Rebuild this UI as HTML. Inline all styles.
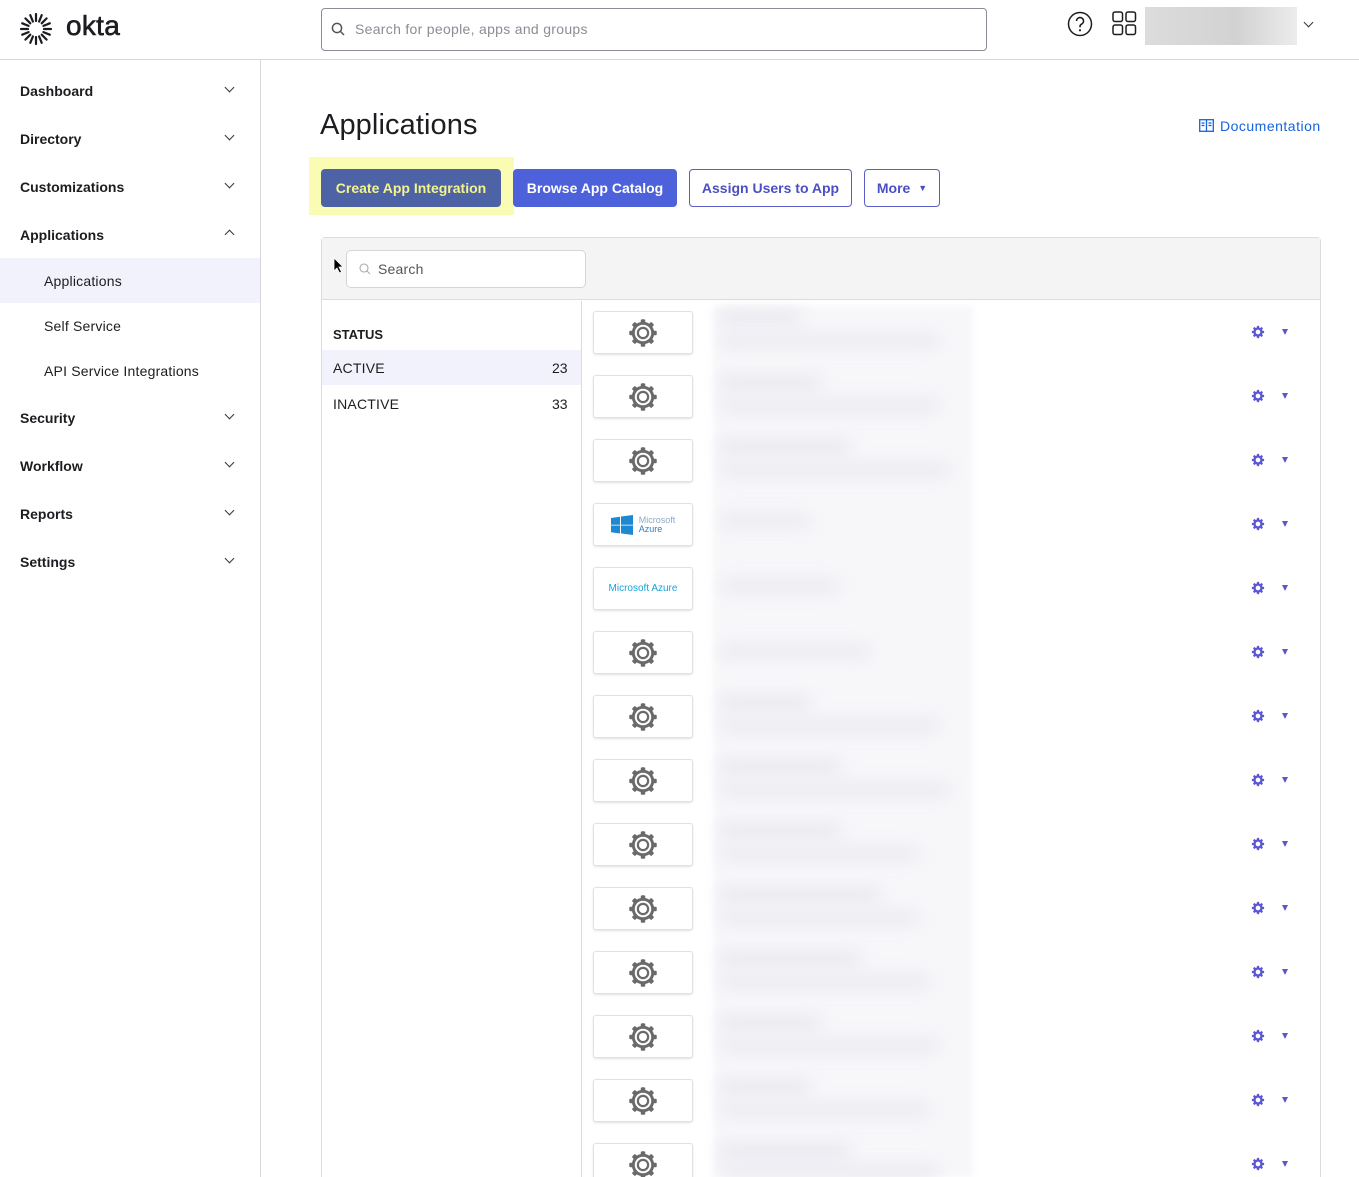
<!DOCTYPE html>
<html><head><meta charset="utf-8"><style>
*{box-sizing:border-box;margin:0;padding:0}
html,body{width:1359px;height:1177px;overflow:hidden}
body{background:#fff;font-family:"Liberation Sans",sans-serif;color:#1d1d21;position:relative}
.a{position:absolute}
.nav{font-size:14px;font-weight:bold;color:#1d1d21}
.chev{position:absolute;left:226px;width:7px;height:7px;border-right:1.5px solid #333;border-bottom:1.5px solid #333;transform:rotate(45deg)}
.chevu{transform:rotate(-135deg)}
.sub{font-size:14px;color:#1d1d21;letter-spacing:0.2px}
.btn{position:absolute;top:169px;height:38px;border-radius:4px;font-size:14px;font-weight:bold;display:flex;align-items:center;justify-content:center}
.logo{position:absolute;left:593px;width:100px;height:43px;border:1px solid #e2e2e2;border-radius:3px;background:#fff;box-shadow:0 1px 2px rgba(0,0,0,.12);display:flex;align-items:center;justify-content:center}
.blur{position:absolute;background:#e2e2ea;filter:blur(8px);border-radius:6px}
.rg{position:absolute;left:1251px}
.tri{position:absolute;left:1282px;width:0;height:0;border-left:3.5px solid transparent;border-right:3.5px solid transparent;border-top:6px solid #5b57d1}
</style></head><body>
<svg width="0" height="0" style="position:absolute"><defs>
<symbol id="g" viewBox="0 0 24 24"><g fill="#6a6a6a"><circle cx="12" cy="12" r="9"/><g><rect x="10.2" y="1" width="3.6" height="4.5" rx="1"/><rect x="10.2" y="18.5" width="3.6" height="4.5" rx="1"/><rect x="1" y="10.2" width="4.5" height="3.6" rx="1"/><rect x="18.5" y="10.2" width="4.5" height="3.6" rx="1"/><g transform="rotate(45 12 12)"><rect x="10.2" y="1" width="3.6" height="4.5" rx="1"/><rect x="10.2" y="18.5" width="3.6" height="4.5" rx="1"/><rect x="1" y="10.2" width="4.5" height="3.6" rx="1"/><rect x="18.5" y="10.2" width="4.5" height="3.6" rx="1"/></g></g></g><circle cx="12" cy="12" r="6.6" fill="#fff"/><circle cx="12" cy="12" r="5" fill="#6a6a6a"/><circle cx="12" cy="12" r="3.2" fill="#fff"/></symbol>
<symbol id="p" viewBox="0 0 24 24"><g fill="#5b57d1"><circle cx="12" cy="12" r="8"/><rect x="10" y="1.5" width="4" height="21" rx="1"/><rect x="1.5" y="10" width="21" height="4" rx="1"/><g transform="rotate(45 12 12)"><rect x="10" y="1.5" width="4" height="21" rx="1"/><rect x="1.5" y="10" width="21" height="4" rx="1"/></g></g><circle cx="12" cy="12" r="4" fill="#fff"/></symbol>
</defs></svg>

<!-- header -->
<svg class="a" style="left:19px;top:12px" width="34" height="34" viewBox="0 0 34 34"><g stroke="#1d1d21" stroke-width="2.2" stroke-linecap="round">
<line x1="17" y1="2" x2="17" y2="9"/><line x1="17" y1="25" x2="17" y2="32"/><line x1="2" y1="17" x2="9" y2="17"/><line x1="25" y1="17" x2="32" y2="17"/>
<line x1="6.4" y1="6.4" x2="11.3" y2="11.3"/><line x1="22.7" y1="22.7" x2="27.6" y2="27.6"/><line x1="27.6" y1="6.4" x2="22.7" y2="11.3"/><line x1="11.3" y1="22.7" x2="6.4" y2="27.6"/>
<line x1="11.3" y1="3.2" x2="13.9" y2="9.6"/><line x1="20.1" y1="24.4" x2="22.7" y2="30.8"/><line x1="22.7" y1="3.2" x2="20.1" y2="9.6"/><line x1="13.9" y1="24.4" x2="11.3" y2="30.8"/>
<line x1="3.2" y1="11.3" x2="9.6" y2="13.9"/><line x1="24.4" y1="20.1" x2="30.8" y2="22.7"/><line x1="30.8" y1="11.3" x2="24.4" y2="13.9"/><line x1="9.6" y1="20.1" x2="3.2" y2="22.7"/></g></svg>
<div class="a" style="left:66px;top:10px;font-size:28px;font-weight:normal;letter-spacing:0.3px;-webkit-text-stroke:0.6px #1d1d21">okta</div>
<div class="a" style="left:321px;top:8px;width:666px;height:43px;border:1px solid #8c8c96;border-radius:4px"></div>
<svg class="a" style="left:331px;top:22px" width="14" height="14" viewBox="0 0 14 14"><circle cx="6" cy="6" r="4.6" fill="none" stroke="#555" stroke-width="1.5"/><line x1="9.4" y1="9.4" x2="13" y2="13" stroke="#555" stroke-width="1.5"/></svg>
<div class="a" style="left:355px;top:21px;font-size:14px;color:#8c8c96;letter-spacing:0.3px">Search for people, apps and groups</div>
<svg class="a" style="left:1067px;top:11px" width="26" height="26" viewBox="0 0 26 26"><circle cx="13" cy="13" r="11.5" fill="none" stroke="#1d1d21" stroke-width="1.5"/><path d="M9.5 10a3.5 3.5 0 1 1 5 3.2c-1 .5-1.5 1.2-1.5 2.3v.8" fill="none" stroke="#1d1d21" stroke-width="1.6"/><circle cx="13" cy="19.3" r="1.1" fill="#1d1d21"/></svg>
<svg class="a" style="left:1112px;top:11px" width="25" height="25" viewBox="0 0 25 25"><g fill="none" stroke="#1d1d21" stroke-width="1.5"><rect x="1" y="1" width="9.5" height="9.5" rx="2"/><rect x="14" y="1" width="9.5" height="9.5" rx="2"/><rect x="1" y="14" width="9.5" height="9.5" rx="2"/><rect x="14" y="14" width="9.5" height="9.5" rx="2"/></g></svg>
<div class="a" style="left:1145px;top:7px;width:152px;height:38px;background:linear-gradient(90deg,#dcdcdc,#d2d2d2 60%,#ececec)"></div>
<div class="a" style="left:1305px;top:19px;width:7px;height:7px;border-right:1.5px solid #333;border-bottom:1.5px solid #333;transform:rotate(45deg)"></div>
<div class="a" style="left:0;top:59px;width:1359px;height:1px;background:#d7d7dc"></div>

<!-- sidebar -->
<div class="a" style="left:260px;top:60px;width:1px;height:1117px;background:#d7d7dc"></div>
<div class="a nav" style="left:20px;top:83px">Dashboard</div><div class="chev" style="top:84px"></div>
<div class="a nav" style="left:20px;top:131px">Directory</div><div class="chev" style="top:132px"></div>
<div class="a nav" style="left:20px;top:179px">Customizations</div><div class="chev" style="top:180px"></div>
<div class="a nav" style="left:20px;top:227px">Applications</div><div class="chev chevu" style="top:231px"></div>
<div class="a" style="left:0;top:258px;width:260px;height:45px;background:#f1f2fb"></div>
<div class="a sub" style="left:44px;top:273px">Applications</div>
<div class="a sub" style="left:44px;top:318px">Self Service</div>
<div class="a sub" style="left:44px;top:363px">API Service Integrations</div>
<div class="a nav" style="left:20px;top:410px">Security</div><div class="chev" style="top:411px"></div>
<div class="a nav" style="left:20px;top:458px">Workflow</div><div class="chev" style="top:459px"></div>
<div class="a nav" style="left:20px;top:506px">Reports</div><div class="chev" style="top:507px"></div>
<div class="a nav" style="left:20px;top:554px">Settings</div><div class="chev" style="top:555px"></div>

<!-- main -->
<div class="a" style="left:320px;top:109px;font-size:29px;color:#1d1d21;letter-spacing:0.1px">Applications</div>
<svg class="a" style="left:1199px;top:119px" width="15" height="13" viewBox="0 0 15 13"><g fill="none" stroke="#1662dd" stroke-width="1.3"><rect x="0.7" y="0.7" width="13.6" height="11.6"/><line x1="7.5" y1="0.7" x2="7.5" y2="12.3"/><line x1="2.5" y1="4" x2="5.5" y2="4"/><line x1="2.5" y1="6.5" x2="5.5" y2="6.5"/><line x1="9.5" y1="4" x2="12.5" y2="4"/><line x1="9.5" y1="6.5" x2="12.5" y2="6.5"/></g></svg>
<div class="a" style="left:1220px;top:118px;font-size:14px;color:#1662dd;letter-spacing:0.5px">Documentation</div>

<div class="a" style="left:309px;top:157px;width:205px;height:58px;background:#fbfcb4"></div>
<div class="btn" style="left:321px;width:180px;background:#4e62a6;color:#f3f58a">Create App Integration</div>
<div class="btn" style="left:513px;width:164px;background:#4d61db;color:#fff">Browse App Catalog</div>
<div class="btn" style="left:689px;width:163px;border:1px solid #5a5fc9;color:#4b4fc4">Assign Users to App</div>
<div class="btn" style="left:864px;width:76px;border:1px solid #5a5fc9;color:#4b4fc4">More&nbsp;<span style="font-size:9px;margin-left:4px">▼</span></div>

<div class="a" style="left:321px;top:237px;width:1000px;height:960px;border:1px solid #dcdcdc;border-radius:4px;background:#fff"></div>
<div class="a" style="left:322px;top:238px;width:998px;height:62px;background:#f4f4f4;border-bottom:1px solid #dcdcdc"></div>
<div class="a" style="left:346px;top:250px;width:240px;height:38px;background:#fff;border:1px solid #d5d5d8;border-radius:5px"></div>
<svg class="a" style="left:359px;top:263px" width="12" height="12" viewBox="0 0 12 12"><circle cx="5" cy="5" r="4" fill="none" stroke="#aaa" stroke-width="1.1"/><line x1="8" y1="8" x2="11" y2="11" stroke="#aaa" stroke-width="1.1"/></svg>
<div class="a" style="left:378px;top:261px;font-size:14px;color:#555;letter-spacing:0.2px">Search</div>
<svg class="a" style="left:333px;top:257px" width="11" height="17" viewBox="0 0 11 17"><path d="M1 1v13l3-3 2.5 5 2-1-2.5-5h4z" fill="#000" stroke="#fff" stroke-width="0.8"/></svg>

<div class="a" style="left:581px;top:301px;width:1px;height:876px;background:#dcdcdc"></div>
<div class="a" style="left:333px;top:327px;font-size:13px;font-weight:bold">STATUS</div>
<div class="a" style="left:322px;top:350px;width:259px;height:35px;background:#f1f2fb"></div>
<div class="a" style="left:333px;top:360px;font-size:14px;letter-spacing:0.2px">ACTIVE</div><div class="a" style="left:552px;top:360px;font-size:14px">23</div>
<div class="a" style="left:333px;top:396px;font-size:14px;letter-spacing:0.2px">INACTIVE</div><div class="a" style="left:552px;top:396px;font-size:14px">33</div>

<!-- blurred area -->
<div class="a" style="left:713px;top:306px;width:260px;height:871px;background:#f7f7fa;filter:blur(3px)"></div>

<!-- rows -->
<div class="logo" style="top:311px"><svg width="30" height="30"><use href="#g"/></svg></div>
<div class="logo" style="top:375px"><svg width="30" height="30"><use href="#g"/></svg></div>
<div class="logo" style="top:439px"><svg width="30" height="30"><use href="#g"/></svg></div>
<div class="logo" style="top:503px"><svg width="22" height="20" viewBox="0 0 22 20" style="margin-right:6px"><path d="M0 3l9-1.3v8H0zM10 1.5L22 0v9.7H10zM0 10.5h9v8L0 17.2zM10 10.5h12V20l-12-1.6z" fill="#1e88d0"/></svg><div style="font-size:9px;line-height:9px;color:#2f7fc4"><span style="color:#8fa9c9">Microsoft</span><br>Azure</div></div>
<div class="logo" style="top:567px"><span style="font-size:10px;color:#1aa3d8">Microsoft Azure</span></div>
<div class="logo" style="top:631px"><svg width="30" height="30"><use href="#g"/></svg></div>
<div class="logo" style="top:695px"><svg width="30" height="30"><use href="#g"/></svg></div>
<div class="logo" style="top:759px"><svg width="30" height="30"><use href="#g"/></svg></div>
<div class="logo" style="top:823px"><svg width="30" height="30"><use href="#g"/></svg></div>
<div class="logo" style="top:887px"><svg width="30" height="30"><use href="#g"/></svg></div>
<div class="logo" style="top:951px"><svg width="30" height="30"><use href="#g"/></svg></div>
<div class="logo" style="top:1015px"><svg width="30" height="30"><use href="#g"/></svg></div>
<div class="logo" style="top:1079px"><svg width="30" height="30"><use href="#g"/></svg></div>
<div class="logo" style="top:1143px"><svg width="30" height="30"><use href="#g"/></svg></div>

<div class="blur" style="left:720px;top:312px;width:80px;height:10px"></div><div class="blur" style="left:720px;top:335px;width:220px;height:12px;opacity:.7"></div>
<div class="blur" style="left:720px;top:378px;width:100px;height:10px"></div><div class="blur" style="left:720px;top:400px;width:220px;height:12px;opacity:.7"></div>
<div class="blur" style="left:720px;top:442px;width:130px;height:10px"></div><div class="blur" style="left:720px;top:464px;width:230px;height:12px;opacity:.7"></div>
<div class="blur" style="left:720px;top:515px;width:90px;height:12px;opacity:.7"></div>
<div class="blur" style="left:720px;top:580px;width:120px;height:12px;opacity:.7"></div>
<div class="blur" style="left:720px;top:645px;width:150px;height:12px;opacity:.7"></div>
<div class="blur" style="left:720px;top:698px;width:90px;height:10px"></div><div class="blur" style="left:720px;top:720px;width:220px;height:12px;opacity:.7"></div>
<div class="blur" style="left:720px;top:762px;width:120px;height:10px"></div><div class="blur" style="left:720px;top:784px;width:230px;height:12px;opacity:.7"></div>
<div class="blur" style="left:720px;top:826px;width:120px;height:10px"></div><div class="blur" style="left:720px;top:848px;width:200px;height:12px;opacity:.7"></div>
<div class="blur" style="left:720px;top:890px;width:160px;height:10px"></div><div class="blur" style="left:720px;top:912px;width:200px;height:12px;opacity:.7"></div>
<div class="blur" style="left:720px;top:954px;width:140px;height:10px"></div><div class="blur" style="left:720px;top:976px;width:210px;height:12px;opacity:.7"></div>
<div class="blur" style="left:720px;top:1018px;width:100px;height:10px"></div><div class="blur" style="left:720px;top:1040px;width:220px;height:12px;opacity:.7"></div>
<div class="blur" style="left:720px;top:1082px;width:90px;height:10px"></div><div class="blur" style="left:720px;top:1104px;width:210px;height:12px;opacity:.7"></div>
<div class="blur" style="left:720px;top:1146px;width:130px;height:10px"></div><div class="blur" style="left:720px;top:1166px;width:220px;height:12px;opacity:.7"></div>

<svg class="rg" style="top:325px" width="14" height="14"><use href="#p"/></svg><div class="tri" style="top:329px"></div>
<svg class="rg" style="top:389px" width="14" height="14"><use href="#p"/></svg><div class="tri" style="top:393px"></div>
<svg class="rg" style="top:453px" width="14" height="14"><use href="#p"/></svg><div class="tri" style="top:457px"></div>
<svg class="rg" style="top:517px" width="14" height="14"><use href="#p"/></svg><div class="tri" style="top:521px"></div>
<svg class="rg" style="top:581px" width="14" height="14"><use href="#p"/></svg><div class="tri" style="top:585px"></div>
<svg class="rg" style="top:645px" width="14" height="14"><use href="#p"/></svg><div class="tri" style="top:649px"></div>
<svg class="rg" style="top:709px" width="14" height="14"><use href="#p"/></svg><div class="tri" style="top:713px"></div>
<svg class="rg" style="top:773px" width="14" height="14"><use href="#p"/></svg><div class="tri" style="top:777px"></div>
<svg class="rg" style="top:837px" width="14" height="14"><use href="#p"/></svg><div class="tri" style="top:841px"></div>
<svg class="rg" style="top:901px" width="14" height="14"><use href="#p"/></svg><div class="tri" style="top:905px"></div>
<svg class="rg" style="top:965px" width="14" height="14"><use href="#p"/></svg><div class="tri" style="top:969px"></div>
<svg class="rg" style="top:1029px" width="14" height="14"><use href="#p"/></svg><div class="tri" style="top:1033px"></div>
<svg class="rg" style="top:1093px" width="14" height="14"><use href="#p"/></svg><div class="tri" style="top:1097px"></div>
<svg class="rg" style="top:1157px" width="14" height="14"><use href="#p"/></svg><div class="tri" style="top:1161px"></div>
</body></html>
